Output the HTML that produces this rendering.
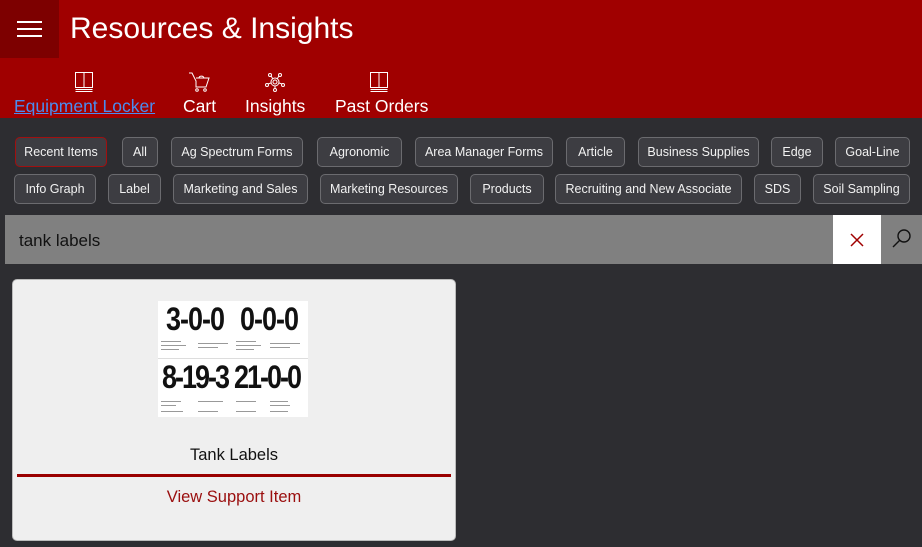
<!DOCTYPE html>
<html><head><meta charset="utf-8"><style>
*{margin:0;padding:0;box-sizing:border-box}
body{width:922px;height:547px;background:#2d2d31;font-family:"Liberation Sans",sans-serif;position:relative;overflow:hidden}
.hdr{position:absolute;left:0;top:0;width:922px;height:118px;background:#a00000}
.ham{position:absolute;left:0;top:0;width:59px;height:58px;background:#7d0000}
.ham i{position:absolute;left:17px;width:25px;height:2px;background:#fff}
.title{position:absolute;left:70px;top:12px;font-size:30px;color:#fff}
.nav{position:absolute;top:96px;font-size:17.5px;color:#fff}
.ico{position:absolute;top:72px}
.chip{position:absolute;height:30px;border:1px solid #6b6b6f;background:#3d3d42;border-radius:5px;color:#f2f2f2;font-size:12.5px;line-height:28px;text-align:center;white-space:nowrap}
.r1{top:137px}.r2{top:174px}
.search{position:absolute;left:5px;top:215px;width:917px;height:49px;background:#808080}
.search span{position:absolute;left:14px;top:16px;font-size:17px;color:#111}
.clr{position:absolute;left:833px;top:215px;width:48px;height:49px;background:#fff}
.card{position:absolute;left:12px;top:279px;width:444px;height:262px;background:#efefef;border:1px solid #bbb;border-radius:5px}
.num{position:absolute;font-size:27px;font-weight:bold;letter-spacing:-1px;transform:scale(1,1.2);transform-origin:0 0;color:#111}
.ln{position:absolute;height:1px;background:#999}
</style></head><body>
<div class="hdr">
<div class="ham"><i style="top:21px"></i><i style="top:28px"></i><i style="top:35px"></i></div>
<div class="title">Resources &amp; Insights</div>
<svg class="ico" style="left:74px" width="20" height="20" viewBox="0 0 20 20" fill="none" stroke="#fff" stroke-width="1"><rect x="1.5" y="0.5" width="17" height="15"/><line x1="10" y1="0.5" x2="10" y2="15.5"/><line x1="1.5" y1="17.5" x2="18.5" y2="17.5"/><line x1="1.5" y1="19.5" x2="18.5" y2="19.5"/></svg>
<svg class="ico" style="left:188px" width="22" height="20" viewBox="0 0 22 20" fill="none" stroke="#fff" stroke-width="1"><path d="M1 1h3l4 8v6h10l3-9H8"/><path d="M11 6c0-2 4-3 5 0"/><circle cx="9" cy="18" r="1.3"/><circle cx="17" cy="18" r="1.3"/></svg>
<svg class="ico" style="left:264px" width="22" height="20" viewBox="0 0 22 20" fill="none" stroke="#fff" stroke-width="1"><circle cx="11" cy="10" r="4"/><circle cx="11" cy="10" r="2"/><circle cx="6" cy="3" r="1.5"/><circle cx="16" cy="3" r="1.5"/><circle cx="3" cy="13" r="1.5"/><circle cx="19" cy="13" r="1.5"/><circle cx="11" cy="18" r="1.5"/><path d="M7 4l2 3M15 4l-2 3M4 12l3-1M18 12l-3-1M11 14v2.5"/></svg>
<svg class="ico" style="left:369px" width="20" height="20" viewBox="0 0 20 20" fill="none" stroke="#fff" stroke-width="1"><rect x="1.5" y="0.5" width="17" height="15"/><line x1="10" y1="0.5" x2="10" y2="15.5"/><line x1="1.5" y1="17.5" x2="18.5" y2="17.5"/><line x1="1.5" y1="19.5" x2="18.5" y2="19.5"/></svg>
<div class="nav" style="left:14px;color:#4a8cf0;text-decoration:underline">Equipment Locker</div>
<div class="nav" style="left:183px">Cart</div>
<div class="nav" style="left:245px">Insights</div>
<div class="nav" style="left:335px">Past Orders</div>
</div>
<div class="chip r1" style="left:15px;width:92px;border-color:#a01010">Recent Items</div>
<div class="chip r1" style="left:122px;width:36px">All</div>
<div class="chip r1" style="left:171px;width:132px">Ag Spectrum Forms</div>
<div class="chip r1" style="left:317px;width:85px">Agronomic</div>
<div class="chip r1" style="left:415px;width:138px">Area Manager Forms</div>
<div class="chip r1" style="left:566px;width:59px">Article</div>
<div class="chip r1" style="left:638px;width:121px">Business Supplies</div>
<div class="chip r1" style="left:771px;width:52px">Edge</div>
<div class="chip r1" style="left:835px;width:75px">Goal-Line</div>
<div class="chip r2" style="left:14px;width:82px">Info Graph</div>
<div class="chip r2" style="left:108px;width:53px">Label</div>
<div class="chip r2" style="left:173px;width:135px">Marketing and Sales</div>
<div class="chip r2" style="left:320px;width:138px">Marketing Resources</div>
<div class="chip r2" style="left:470px;width:74px">Products</div>
<div class="chip r2" style="left:555px;width:187px">Recruiting and New Associate</div>
<div class="chip r2" style="left:754px;width:47px">SDS</div>
<div class="chip r2" style="left:813px;width:97px">Soil Sampling</div>
<div class="search"><span>tank labels</span></div>
<div class="clr"><svg width="48" height="49"><path d="M18 19l12 12M30 19l-12 12" stroke="#a00000" stroke-width="1.5"/></svg></div>
<svg style="position:absolute;left:891px;top:228px" width="22" height="22" fill="none" stroke="#111" stroke-width="1.4"><circle cx="13" cy="8" r="6"/><path d="M9 12l-7 7"/></svg>
<div class="card">
<div style="position:absolute;left:145px;top:21px;width:150px;height:116px;background:#fff;overflow:hidden">
<div class="num" style="left:8px;top:0px">3-0-0</div>
<div class="num" style="left:82px;top:0px">0-0-0</div>
<div class="num" style="left:4px;top:58px;letter-spacing:-2px">8-19-3</div>
<div class="num" style="left:76px;top:58px;letter-spacing:-2px">21-0-0</div>
<div class="ln" style="left:0;top:57px;width:150px;background:#ddd"></div>
<div class="ln" style="left:3px;top:40px;width:20px"></div><div class="ln" style="left:3px;top:44px;width:25px"></div><div class="ln" style="left:3px;top:48px;width:18px"></div><div class="ln" style="left:40px;top:42px;width:30px"></div><div class="ln" style="left:40px;top:46px;width:20px"></div>
<div class="ln" style="left:78px;top:40px;width:20px"></div><div class="ln" style="left:78px;top:44px;width:25px"></div><div class="ln" style="left:78px;top:48px;width:18px"></div><div class="ln" style="left:112px;top:42px;width:30px"></div><div class="ln" style="left:112px;top:46px;width:20px"></div>
<div class="ln" style="left:3px;top:100px;width:20px"></div><div class="ln" style="left:3px;top:104px;width:15px"></div><div class="ln" style="left:3px;top:110px;width:22px"></div><div class="ln" style="left:40px;top:100px;width:25px"></div><div class="ln" style="left:40px;top:110px;width:20px"></div>
<div class="ln" style="left:78px;top:100px;width:20px"></div><div class="ln" style="left:78px;top:110px;width:20px"></div><div class="ln" style="left:112px;top:100px;width:18px"></div><div class="ln" style="left:112px;top:104px;width:20px"></div><div class="ln" style="left:112px;top:110px;width:18px"></div>
</div>
<div style="position:absolute;left:0;width:442px;top:166px;text-align:center;font-size:16.5px;color:#111">Tank Labels</div>
<div style="position:absolute;left:4px;top:194px;width:434px;height:3px;background:#9a0000"></div>
<div style="position:absolute;left:0;width:442px;top:208px;text-align:center;font-size:16.5px;color:#9a0e0e">View Support Item</div>
</div>
</body></html>
